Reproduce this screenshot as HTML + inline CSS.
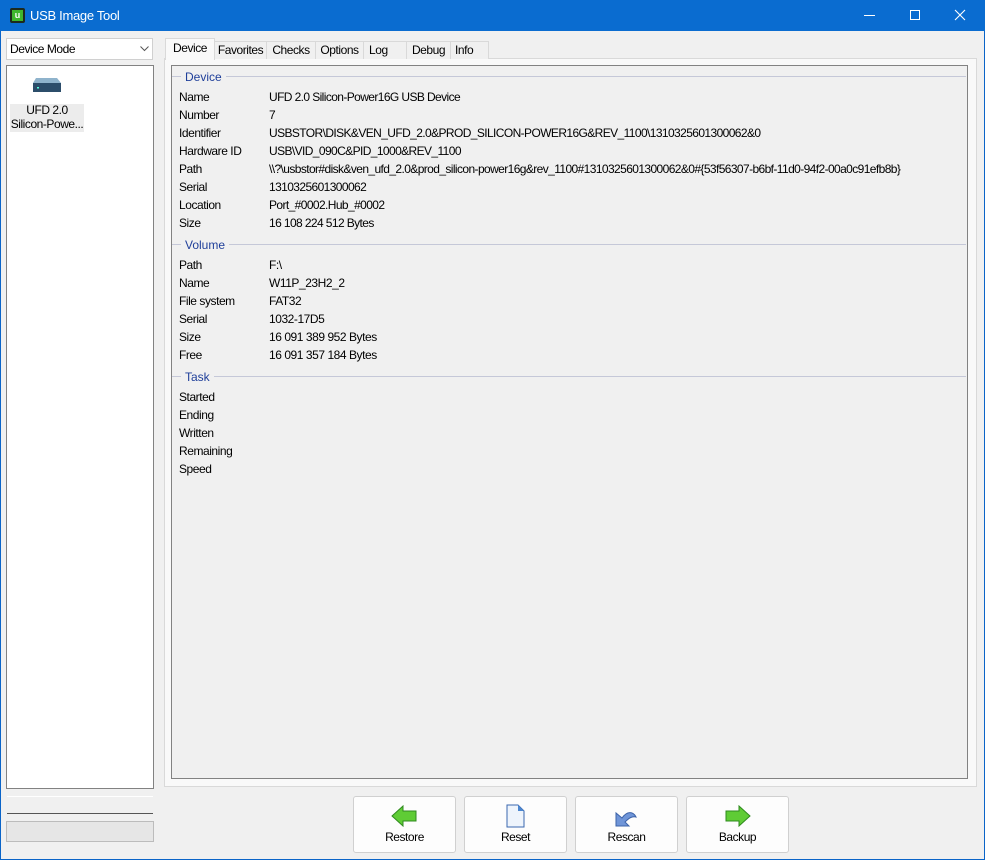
<!DOCTYPE html>
<html><head><meta charset="utf-8"><style>
*{margin:0;padding:0;box-sizing:border-box}
body{width:985px;height:860px;overflow:hidden;background:#f0f0f0;font-family:"Liberation Sans",sans-serif;font-size:12px;letter-spacing:-0.45px;color:#000;position:relative}
.a{position:absolute}
.t{position:absolute;line-height:14px;white-space:nowrap}
.v{letter-spacing:-0.6px}
.tab{position:absolute;top:41px;height:18px;border:1px solid #d9d9d9;border-bottom:none;background:#f0f0f0;text-align:center;line-height:17px}
.sec{position:absolute;left:172px;height:1px;background:#c5c8d8;width:794px}
.sh{position:absolute;left:181px;padding:0 4px;background:#f0f0f0;color:#1f3f9a;line-height:14px;font-size:12px;letter-spacing:0}
.btn{position:absolute;top:796px;width:103px;height:57px;background:#fdfdfd;border:1px solid #d0d0d0;border-radius:3px;text-align:center}
.btn span{position:absolute;left:0;right:0;top:33px;line-height:14px}
</style></head><body>
<div class="a" style="left:0;top:0;width:985px;height:860px;border:1px solid #0a64c8;border-top:none"></div>
<div class="a" style="left:0;top:0;width:985px;height:31px;background:#0a6cd0"></div>
<div class="a" style="left:10px;top:8px;width:15px;height:15px;background:#1d2a1d;border-radius:2px"></div>
<div class="a" style="left:12px;top:10px;width:11px;height:11px;background:#3fb62c;color:#fff;font-size:9px;font-weight:bold;text-align:center;line-height:11px;letter-spacing:0">u</div>
<div class="t" style="left:30px;top:9px;color:#fff;font-size:13px;letter-spacing:-0.3px">USB Image Tool</div>
<div class="a" style="left:864px;top:15px;width:11px;height:1px;background:#fff"></div>
<div class="a" style="left:910px;top:10px;width:10px;height:10px;border:1px solid #fff"></div>
<svg class="a" style="left:954px;top:9px" width="12" height="12"><path d="M1 1L11 11M11 1L1 11" stroke="#fff" stroke-width="1.1"/></svg>

<div class="a" style="left:6px;top:38px;width:147px;height:22px;background:#fff;border:1px solid #d0d0d0"></div>
<div class="t" style="left:10px;top:42px">Device Mode</div>
<svg class="a" style="left:140px;top:46px" width="9" height="6"><path d="M0.5 0.5L4.5 4.5L8.5 0.5" stroke="#555" fill="none"/></svg>

<div class="a" style="left:6px;top:65px;width:148px;height:724px;background:#fff;border:1px solid #828282"></div>
<svg class="a" style="left:32px;top:76px" width="30" height="18"><path d="M4 2H25L29 7H1Z" fill="#8fb3cc"/><rect x="1" y="7" width="28" height="9" fill="#2c4d6a"/><rect x="5" y="11" width="2" height="1.5" fill="#5fd"/></svg>
<div class="a" style="left:10px;top:104px;width:74px;height:28px;background:#ececec"></div>
<div class="t" style="left:8px;top:103px;width:78px;text-align:center">UFD 2.0<br>Silicon-Powe...</div>

<div class="a" style="left:7px;top:796px;width:146px;height:18px;border-top:1px solid #fff;border-bottom:1px solid #555;background:#f0f0f0"></div>
<div class="a" style="left:6px;top:821px;width:148px;height:21px;border:1px solid #bcbcbc;background:#e6e6e6"></div>

<div class="a" style="left:164px;top:58px;width:813px;height:729px;background:#f9f9f9;border:1px solid #d9d9d9"></div>
<div class="a" style="left:171px;top:65px;width:797px;height:714px;background:#f0f0f0;border:1px solid #828282"></div>
<div class="tab" style="left:214px;width:53px">Favorites</div>
<div class="tab" style="left:266px;width:50px">Checks</div>
<div class="tab" style="left:315px;width:49px">Options</div>
<div class="tab" style="left:363px;width:44px;text-align:left;padding-left:5px">Log</div>
<div class="tab" style="left:406px;width:45px">Debug</div>
<div class="tab" style="left:450px;width:39px;text-align:left;padding-left:4px">Info</div>
<div class="a" style="left:165px;top:38px;width:50px;height:22px;background:#f9f9f9;border:1px solid #d9d9d9;border-bottom:none;text-align:center;line-height:19px">Device</div>

<div class="sec" style="top:76px"></div><div class="sh" style="top:70px">Device</div>
<div class="sec" style="top:244px"></div><div class="sh" style="top:238px">Volume</div>
<div class="sec" style="top:376px"></div><div class="sh" style="top:370px">Task</div>

<div class="t" style="left:179px;top:88px;line-height:18px">Name<br>Number<br>Identifier<br>Hardware ID<br>Path<br>Serial<br>Location<br>Size</div>
<div class="t v" style="left:269px;top:88px;line-height:18px">UFD 2.0 Silicon-Power16G USB Device<br>7<br>USBSTOR\DISK&amp;VEN_UFD_2.0&amp;PROD_SILICON-POWER16G&amp;REV_1100\1310325601300062&amp;0<br>USB\VID_090C&amp;PID_1000&amp;REV_1100<br>\\?\usbstor#disk&amp;ven_ufd_2.0&amp;prod_silicon-power16g&amp;rev_1100#1310325601300062&amp;0#{53f56307-b6bf-11d0-94f2-00a0c91efb8b}<br>1310325601300062<br>Port_#0002.Hub_#0002<br>16 108 224 512 Bytes</div>
<div class="t" style="left:179px;top:256px;line-height:18px">Path<br>Name<br>File system<br>Serial<br>Size<br>Free</div>
<div class="t" style="left:269px;top:256px;line-height:18px">F:\<br>W11P_23H2_2<br>FAT32<br>1032-17D5<br>16 091 389 952 Bytes<br>16 091 357 184 Bytes</div>
<div class="t" style="left:179px;top:388px;line-height:18px">Started<br>Ending<br>Written<br>Remaining<br>Speed</div>

<div class="btn" style="left:353px"><svg class="a" style="left:37px;top:8px" width="26" height="22"><path d="M1 11L12 1V6H25V16H12V21Z" fill="#5fcc35" stroke="#2f8a1e"/></svg><span>Restore</span></div>
<div class="btn" style="left:464px"><svg class="a" style="left:41px;top:7px" width="20" height="24"><path d="M1 1H12L18 7V23H1Z" fill="#eef4fc" stroke="#3a68b0"/><path d="M12 1V7H18Z" fill="#4b86d0"/></svg><span>Reset</span></div>
<div class="btn" style="left:575px"><svg class="a" style="left:38px;top:10px" width="24" height="20"><path d="M2 6V19H15L11 15C15 11 18 9 22 10C19 4 13 4 8 11Z" fill="#6f95d8" stroke="#3c62a8"/></svg><span>Rescan</span></div>
<div class="btn" style="left:686px"><svg class="a" style="left:38px;top:8px" width="26" height="22"><path d="M25 11L14 1V6H1V16H14V21Z" fill="#5fcc35" stroke="#2f8a1e"/></svg><span>Backup</span></div>
</body></html>
